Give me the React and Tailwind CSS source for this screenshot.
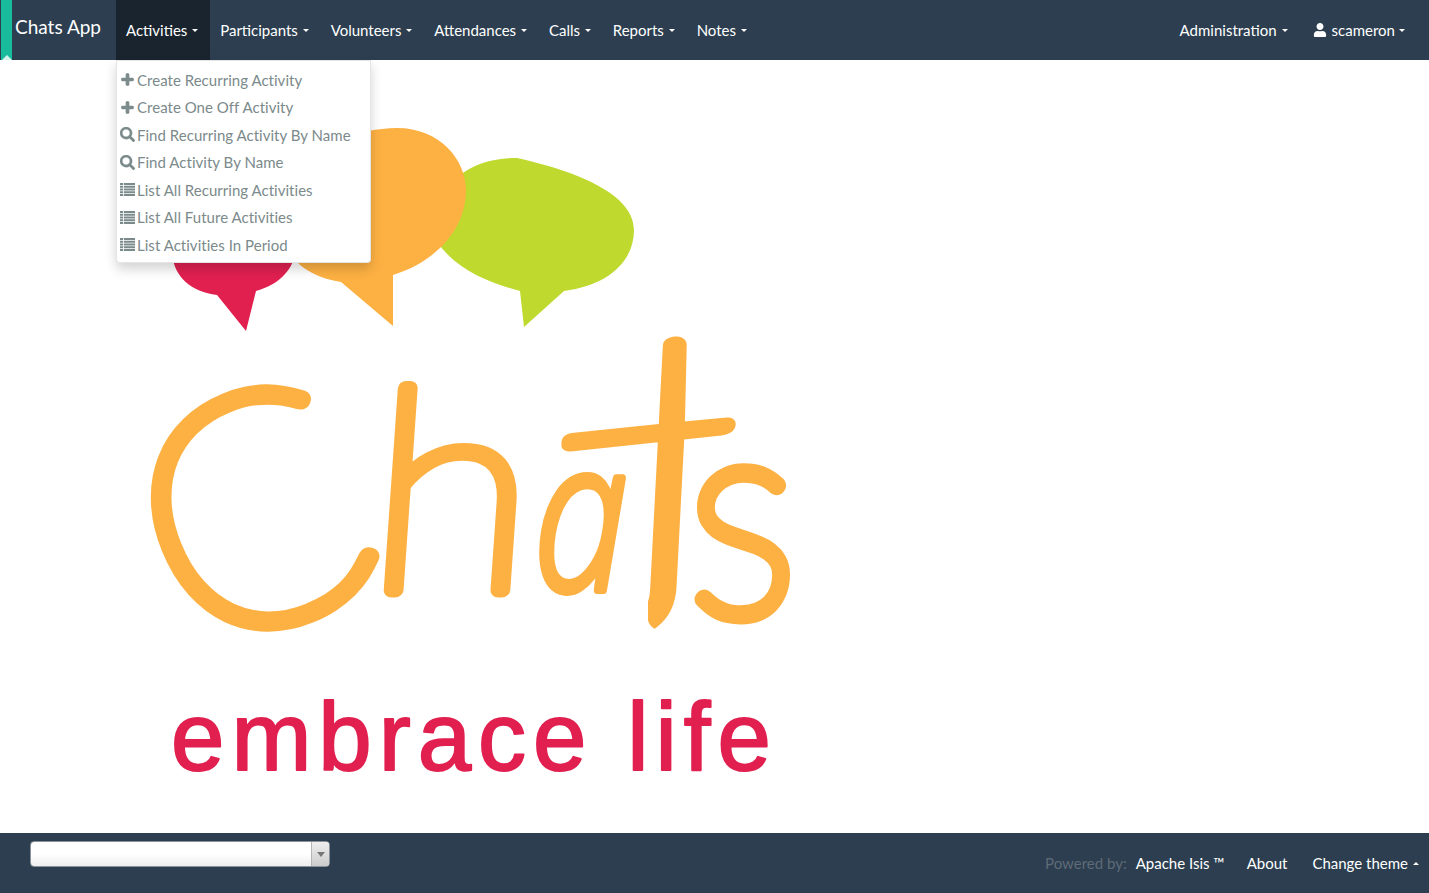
import { FaPlus, FaSearch, FaUser } from "react-icons/fa";

const navLeft = [
  { label: "Activities", active: true },
  { label: "Participants" },
  { label: "Volunteers" },
  { label: "Attendances" },
  { label: "Calls" },
  { label: "Reports" },
  { label: "Notes" },
];

// striped list glyph from the menu
const ListIcon = () => (
  <svg width="15" height="13" viewBox="0 0 15 13" fill="currentColor">
    <rect x="0" y="0" width="15" height="2" />
    <rect x="0" y="2.75" width="15" height="2" />
    <rect x="0" y="5.5" width="15" height="2" />
    <rect x="0" y="8.25" width="15" height="2" />
    <rect x="0" y="11" width="15" height="2" />
    <rect x="3" y="0" width="0.8" height="13" fill="#ffffff" />
  </svg>
);

const PlusIcon = () => <FaPlus size={13} stroke="currentColor" strokeWidth={50} />;
const SearchIcon = () => <FaSearch size={15} stroke="currentColor" strokeWidth={10} />;

const menuItems = [
  { icon: <PlusIcon />, label: "Create Recurring Activity" },
  { icon: <PlusIcon />, label: "Create One Off Activity" },
  { icon: <SearchIcon />, label: "Find Recurring Activity By Name" },
  { icon: <SearchIcon />, label: "Find Activity By Name" },
  { icon: <ListIcon />, label: "List All Recurring Activities" },
  { icon: <ListIcon />, label: "List All Future Activities" },
  { icon: <ListIcon />, label: "List Activities In Period" },
];

const Caret = ({ up }) => (
  <span
    className={
      up
        ? "inline-block w-0 h-0 border-x-[3px] border-x-transparent border-b-[3px] border-b-white"
        : "inline-block w-0 h-0 border-x-[3px] border-x-transparent border-t-[3px] border-t-white"
    }
  />
);

const Letter = ({ transform, size, stroke, family = "Lato, sans-serif", weight = "100", italic, children }) => (
  <text
    transform={transform}
    fontFamily={family}
    fontWeight={weight}
    fontStyle={italic ? "italic" : "normal"}
    fontSize={size}
    fill="#fdb143"
    stroke="#fdb143"
    strokeLinejoin="round"
    strokeLinecap="round"
    strokeWidth={stroke}
  >
    {children}
  </text>
);

const Logo = () => (
  <svg viewBox="140 110 700 680" className="block w-[700px] h-[680px]">
    <defs>
      {/* takes the foot off the t so the stem runs straight down */}
      <clipPath id="t-stem">
        <path d="M540 330 H770 V600 H680 L672 618 A12 12 0 0 1 648 618 V560 H540 Z" />
      </clipPath>
    </defs>
    {/* speech bubbles */}
    <path
      fill="#e12050"
      d="M217 295 L246 331 L256 291 C280 284 293 270 296 250 L172 250 C172 275 190 292 217 295 Z"
    />
    <path
      fill="#bfd92e"
      d="M520 291 L524 327 L564 291 C610 285 634 260 634 230 C634 195 580 172 517 158 C490 158 465 165 445 190 L436 240 C455 270 490 283 520 291 Z"
    />
    <path
      fill="#fdb143"
      d="M393 275 L393 326 L341 282 C320 279 305 270 298 263 C270 240 280 130 397 128 C440 128 466 160 466 190 C466 230 435 262 393 275 Z"
    />
    {/* Chats, as real text */}
    <Letter transform="translate(255 510) rotate(-22) translate(-115 115)" size={320} stroke={17}>
      C
    </Letter>
    <Letter transform="translate(364 590) skewX(-4) scale(1.08 1)" size={280} stroke={15}>
      h
    </Letter>
    <Letter
      transform="translate(534 590) scale(0.8 1)"
      size={211}
      stroke={8}
      family="Open Sans, sans-serif"
      weight="300"
      italic
    >
      a
    </Letter>
    <g clipPath="url(#t-stem)">
      <Letter transform="translate(734 620) skewY(-6) skewX(-3) scale(-1.38 1)" size={420} stroke={14}>
        t
      </Letter>
    </g>
    <Letter transform="translate(688 614) scale(1 1.1)" size={260} stroke={15}>
      s
    </Letter>
    <text
      x="171"
      y="770"
      fontFamily="Liberation Sans, sans-serif"
      fontSize="96"
      letterSpacing="7"
      fill="#e12050"
      stroke="#e12050"
      strokeWidth="2"
      strokeLinejoin="round"
    >
      embrace life
    </text>
  </svg>
);

const App = () => {
  return (
    <div className="h-screen flex flex-col overflow-hidden bg-white font-[Lato,sans-serif] text-[15px] text-white">
      <nav className="relative h-[60px] flex-none flex bg-[#2c3e50]">
        <div className="relative w-[11px] ml-[1px] bg-[#18bc9c]">
          <span className="absolute bottom-0 left-[1px] w-0 h-0 border-x-[5px] border-x-transparent border-b-[5px] border-b-[#d5f3ec]" />
        </div>
        <a className="w-[104px] pl-[3px] pt-[14px] text-[19px] leading-[26px]">Chats App</a>
        <ul className="flex">
          {navLeft.map((item) => (
            <li
              key={item.label}
              className={
                item.active
                  ? "flex items-center gap-[5px] pl-[10px] pr-[11.8px] bg-[#1a242f]"
                  : "flex items-center gap-[5px] pl-[10px] pr-[11.8px]"
              }
            >
              {item.label}
              <Caret />
            </li>
          ))}
        </ul>
        <ul className="flex ml-auto pr-[14px]">
          <li className="flex items-center gap-[5px] px-[10px]">
            Administration
            <Caret />
          </li>
          <li className="flex items-center pl-[15px] pr-[10px]">
            <FaUser size={14} className="mr-[5px]" />
            scameron
            <span className="flex ml-[4px]">
              <Caret />
            </span>
          </li>
        </ul>

        <ul className="absolute z-10 left-[116px] top-[60px] w-[255px] pt-[5px] pb-[3px] bg-white border border-black/10 rounded-b-[4px] shadow-[0_6px_12px_rgba(0,0,0,0.175)] text-[#7b8a8b]">
          {menuItems.map((item) => (
            <li key={item.label} className="h-[27.5px] flex items-center pl-[2px] whitespace-nowrap tracking-[0.03px]">
              <span className="w-[18px] flex justify-center pr-[2px]">{item.icon}</span>
              {item.label}
            </li>
          ))}
        </ul>
      </nav>

      <main className="flex-1 min-h-0 pt-[50px] pl-[140px]">
        <Logo />
      </main>

      <footer className="h-[60px] flex-none flex bg-[#2c3e50]">
        <div className="ml-[30px] mt-[8px] w-[300px] h-[26px] flex rounded-[4px] border border-[#8a9199] bg-gradient-to-b from-white from-50% to-[#eeeeee] overflow-hidden">
          <div className="flex-1" />
          <div className="w-[18px] flex items-center justify-center border-l border-[#b5b5b5] bg-gradient-to-b from-[#eeeeee] to-[#cccccc]">
            <span className="w-0 h-0 border-x-[4px] border-x-transparent border-t-[5px] border-t-[#777777]" />
          </div>
        </div>
        <div className="ml-auto flex items-center pr-[10px]">
          <span className="text-[#5f6b76] mr-[9px]">Powered by:</span>
          <span className="mr-[22px]">Apache Isis ™</span>
          <span className="mr-[25px]">About</span>
          <span className="mr-[5px]">Change theme</span>
          <Caret up />
        </div>
      </footer>
    </div>
  );
};

export default App;
